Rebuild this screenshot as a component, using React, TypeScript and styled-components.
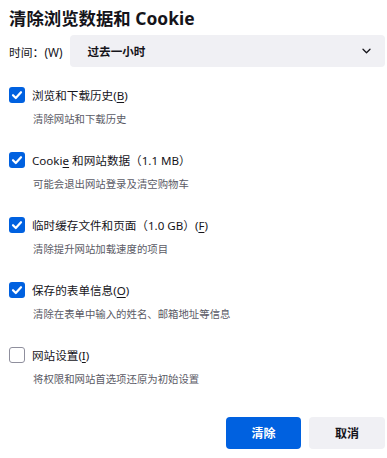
import React from "react";
import styled, { createGlobalStyle } from "styled-components";

const Global = createGlobalStyle`
  html, body { margin: 0; padding: 0; background: #ffffff; }
  body {
    font-family: "Segoe UI", "Noto Sans", "Noto Sans CJK SC", sans-serif;
    color: #15141a;
    -webkit-font-smoothing: antialiased;
  }
`;

const Dialog = styled.div`
  width: 387px;
  height: 458px;
  box-sizing: border-box;
  padding: 7px 2px 0 9px;
  display: flex;
  flex-direction: column;
`;

const Title = styled.h1`
  margin: 0;
  font-size: 17.4px;
  line-height: 22px;
  font-weight: 700;
`;

const TimeRow = styled.div`
  margin-top: 6px;
  display: flex;
  align-items: center;
  gap: 8px;
`;

const TimeLabel = styled.label`
  font-size: 11.8px;
  white-space: nowrap;
`;

const Select = styled.div`
  flex: 1;
  height: 32px;
  box-sizing: border-box;
  background: #f0f0f4;
  border-radius: 4px;
  padding: 0 14px 0 17px;
  display: flex;
  align-items: center;
  justify-content: space-between;
  font-size: 11.6px;
  font-weight: 700;
`;

const List = styled.div`
  margin-top: 20px;
  display: flex;
  flex-direction: column;
  gap: 25px;
`;

const Item = styled.div`
  display: flex;
  flex-direction: column;
`;

const Row = styled.label`
  height: 16px;
  display: flex;
  align-items: center;
  gap: 7px;
  font-size: 11.6px;
  white-space: nowrap;
`;

const Box = styled.span<{ $checked: boolean }>`
  width: 16px;
  height: 16px;
  box-sizing: border-box;
  border-radius: 3px;
  flex: none;
  display: flex;
  align-items: center;
  justify-content: center;
  background: ${(p) => (p.$checked ? "#0061e0" : "#ffffff")};
  border: ${(p) => (p.$checked ? "none" : "1px solid #8f8f9d")};
`;

const Desc = styled.div`
  margin-top: 9px;
  padding-left: 24px;
  font-size: 10.4px;
  line-height: 15px;
  color: #5b5b66;
  white-space: nowrap;
`;

const Key = styled.span`
  text-decoration: underline;
  text-underline-offset: 2px;
`;

const Footer = styled.div`
  margin-top: 30px;
  display: flex;
  justify-content: flex-end;
  gap: 8px;
`;

const Button = styled.button<{ $primary?: boolean }>`
  height: 32px;
  width: ${(p) => (p.$primary ? "75px" : "76px")};
  border: none;
  border-radius: 4px;
  font-family: inherit;
  font-size: 12px;
  font-weight: 700;
  background: ${(p) => (p.$primary ? "#0061e0" : "#f0f0f4")};
  color: ${(p) => (p.$primary ? "#ffffff" : "#15141a")};
  padding: 0;
`;

const Check = () => (
  <svg width="12" height="12" viewBox="0 0 12 12" fill="none">
    <path d="M2 6.2 L4.8 9 L10 3.2" stroke="#ffffff" strokeWidth="2.2" strokeLinecap="round" strokeLinejoin="round" />
  </svg>
);

const Chevron = () => (
  <svg width="9" height="6" viewBox="0 0 9 6" fill="none">
    <path d="M1 1.2 L4.5 4.7 L8 1.2" stroke="#15141a" strokeWidth="1.3" strokeLinecap="round" strokeLinejoin="round" />
  </svg>
);

type Entry = { label: React.ReactNode; desc: string; checked: boolean };

const entries: Entry[] = [
  { label: <>浏览和下载历史(<Key>B</Key>)</>, desc: "清除网站和下载历史", checked: true },
  { label: <>Cooki<Key>e</Key> 和网站数据（1.1 MB）</>, desc: "可能会退出网站登录及清空购物车", checked: true },
  { label: <>临时缓存文件和页面（1.0 GB）(<Key>F</Key>)</>, desc: "清除提升网站加载速度的项目", checked: true },
  { label: <>保存的表单信息(<Key>O</Key>)</>, desc: "清除在表单中输入的姓名、邮箱地址等信息", checked: true },
  { label: <>网站设置(<Key>I</Key>)</>, desc: "将权限和网站首选项还原为初始设置", checked: false },
];

export default function App() {
  return (
    <>
      <Global />
      <Dialog>
        <Title>清除浏览数据和 Cookie</Title>
        <TimeRow>
          <TimeLabel>时间：(W)</TimeLabel>
          <Select>
            <span>过去一小时</span>
            <Chevron />
          </Select>
        </TimeRow>
        <List>
          {entries.map((e, i) => (
            <Item key={i}>
              <Row>
                <Box $checked={e.checked}>{e.checked && <Check />}</Box>
                <span>{e.label}</span>
              </Row>
              <Desc>{e.desc}</Desc>
            </Item>
          ))}
        </List>
        <Footer>
          <Button $primary>清除</Button>
          <Button>取消</Button>
        </Footer>
      </Dialog>
    </>
  );
}
